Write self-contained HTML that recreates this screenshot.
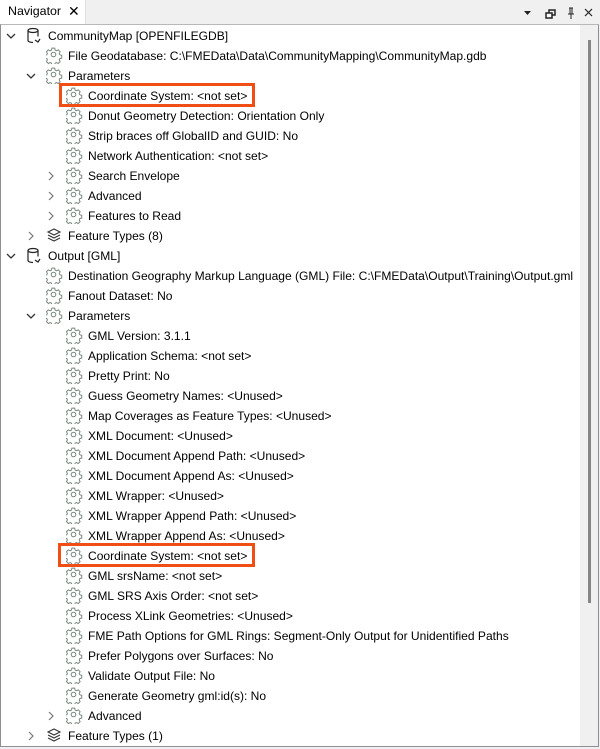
<!DOCTYPE html>
<html><head><meta charset="utf-8"><style>
*{margin:0;padding:0;box-sizing:border-box}
body{width:600px;height:749px;background:#f0f0f0;position:relative;overflow:hidden;font-family:"Segoe UI","Liberation Sans",sans-serif;font-size:12.05px;color:#000}
.tab{position:absolute;left:0;top:0;width:86px;height:24px;background:#fff;border-right:1px solid #e0e0e0}
.tab span{position:absolute;left:8px;top:4px;font-size:12.4px}
.tab b{position:absolute;left:68px;top:3px;font-weight:normal;font-size:14px}
.panel{position:absolute;left:0;top:24px;width:599px;height:723px;background:#fff;border:1px solid #8e8e96;border-top:1px solid #b8b8b8}
.sb{position:absolute;left:580px;top:25px;width:18px;height:721px;background:#f0f0f0}
.thumb{position:absolute;left:588px;top:40px;width:3px;height:563px;background:#868686}
.row{position:absolute;height:20px;line-height:20px;white-space:nowrap}
.box{position:absolute;border:3px solid #f04e14}
</style></head><body>
<div class="tab"><span>Navigator</span><b>✕</b></div>
<svg style="position:absolute;left:520px;top:6px" width="75" height="14">
<path d="M4 5h7l-3.5 4z" fill="#222"/>
<rect x="29" y="4" width="6" height="5" fill="none" stroke="#222" stroke-width="1.5"/><rect x="26" y="7" width="6" height="5" fill="#fff" stroke="#222" stroke-width="1.5"/>
<path d="M49 2h4M50 2v6M52 2v6M48 8h6M51 8v5" stroke="#222" fill="none"/>
<path d="M65 3l7 7M72 3l-7 7" stroke="#222" stroke-width="1.2"/>
</svg>
<div class="panel"></div>
<div class="sb"></div><div class="thumb"></div>
<svg width="0" height="0" style="position:absolute"><defs>
<g id="gear"><path d="M6.5 1.5h3l.4 2 1.5.8 1.8-1 2 2-1 1.8.7 1.5 2 .4v3l-2 .4-.7 1.5 1 1.8-2 2-1.8-1-1.5.7-.4 2h-3l-.4-2-1.5-.7-1.8 1-2-2 1-1.8-.7-1.5-2-.4v-3l2-.4.7-1.5-1-1.8 2-2 1.8 1 1.5-.8z" transform="translate(-.3 -.3) scale(.95)" fill="none" stroke="#75867a" stroke-width="1"/><circle cx="7.5" cy="7.5" r="2.3" fill="none" stroke="#75867a"/></g>
<g id="down"><path d="M1 3l4 4 4-4" fill="none" stroke="#333" stroke-width="1.3"/></g>
<g id="right"><path d="M3 1l4 4-4 4" fill="none" stroke="#777" stroke-width="1.2"/></g>
<g id="db"><ellipse cx="7" cy="3.5" rx="5" ry="2" fill="none" stroke="#222" stroke-width="1.2"/><path d="M2 3.5v10c0 1 2 2 5 2M12 3.5v6M9 13l3 2 2-3" fill="none" stroke="#222" stroke-width="1.2"/></g>
<g id="layers"><path d="M8 2l6 3-6 3-6-3z M2 8l6 3 6-3 M2 11l6 3 6-3" fill="none" stroke="#333" stroke-width="1.1"/></g>
</defs></svg>
<div id="t"></div>
<script>
const rows=[
[0,'d','db','CommunityMap [OPENFILEGDB]'],
[1,'','gear','File Geodatabase: C:\\FMEData\\Data\\CommunityMapping\\CommunityMap.gdb'],
[1,'d','gear','Parameters'],
[2,'','gear','Coordinate System: <not set>'],
[2,'','gear','Donut Geometry Detection: Orientation Only'],
[2,'','gear','Strip braces off GlobalID and GUID: No'],
[2,'','gear','Network Authentication: <not set>'],
[2,'r','gear','Search Envelope'],
[2,'r','gear','Advanced'],
[2,'r','gear','Features to Read'],
[1,'r','layers','Feature Types (8)'],
[0,'d','db','Output [GML]'],
[1,'','gear','Destination Geography Markup Language (GML) File: C:\\FMEData\\Output\\Training\\Output.gml'],
[1,'','gear','Fanout Dataset: No'],
[1,'d','gear','Parameters'],
[2,'','gear','GML Version: 3.1.1'],
[2,'','gear','Application Schema: <not set>'],
[2,'','gear','Pretty Print: No'],
[2,'','gear','Guess Geometry Names: <Unused>'],
[2,'','gear','Map Coverages as Feature Types: <Unused>'],
[2,'','gear','XML Document: <Unused>'],
[2,'','gear','XML Document Append Path: <Unused>'],
[2,'','gear','XML Document Append As: <Unused>'],
[2,'','gear','XML Wrapper: <Unused>'],
[2,'','gear','XML Wrapper Append Path: <Unused>'],
[2,'','gear','XML Wrapper Append As: <Unused>'],
[2,'','gear','Coordinate System: <not set>'],
[2,'','gear','GML srsName: <not set>'],
[2,'','gear','GML SRS Axis Order: <not set>'],
[2,'','gear','Process XLink Geometries: <Unused>'],
[2,'','gear','FME Path Options for GML Rings: Segment-Only Output for Unidentified Paths'],
[2,'','gear','Prefer Polygons over Surfaces: No'],
[2,'','gear','Validate Output File: No'],
[2,'','gear','Generate Geometry gml:id(s): No'],
[2,'r','gear','Advanced'],
[1,'r','layers','Feature Types (1)']];
let h='';
rows.forEach((r,i)=>{
 const y=26+i*20, L=r[0]*20;
 const esc=r[3].replace(/&/g,'&amp;').replace(/</g,'&lt;').replace(/>/g,'&gt;');
 if(r[1]) h+=`<svg style="left:${L+6}px;top:${y+5}px;position:absolute" width="10" height="10"><use href="#${r[1]=='d'?'down':'right'}"/></svg>`;
 h+=`<svg style="position:absolute;left:${L+26}px;top:${y+1}px" width="17" height="17"><use href="#${r[2]}"/></svg>`;
 h+=`<div class="row" style="left:${L+48}px;top:${y}px">${esc}</div>`;
});
h+='<div class="box" style="left:59px;top:83px;width:196px;height:24px"></div>';
h+='<div class="box" style="left:58px;top:543px;width:197px;height:24px"></div>';
document.getElementById('t').innerHTML=h;
</script>
</body></html>
